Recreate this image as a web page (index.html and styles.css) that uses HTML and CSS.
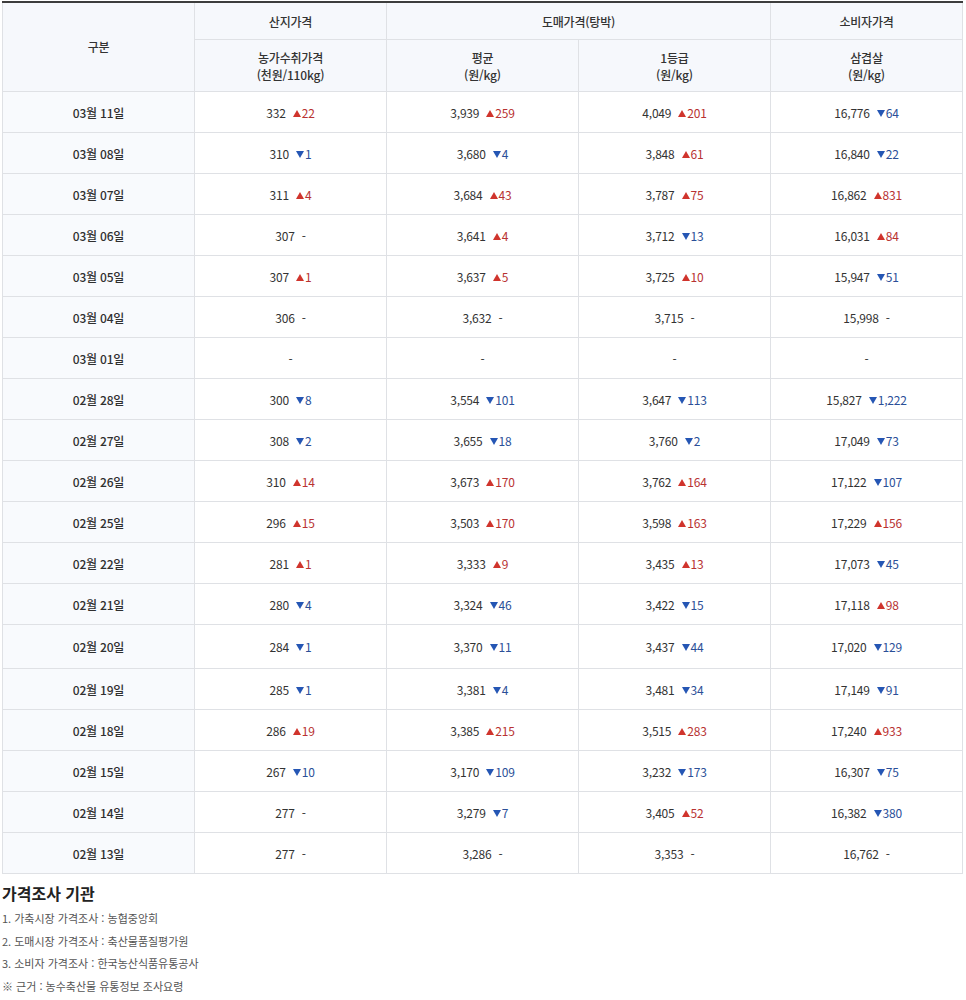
FILE: index.html
```html
<!DOCTYPE html>
<html lang="ko">
<head>
<meta charset="utf-8">
<title>돼지 가격</title>
<link rel="stylesheet" href="styles.css">
</head>
<body>
<div class="wrap">
<table class="price">
  <colgroup><col><col><col><col><col></colgroup>
  <thead>
    <tr class="h1">
      <th rowspan="2" class="gubun">구분</th>
      <th>산지가격</th>
      <th colspan="2">도매가격(탕박)</th>
      <th>소비자가격</th>
    </tr>
    <tr class="h2">
      <th>농가수취가격<br>(천원/110kg)</th>
      <th>평균<br>(원/kg)</th>
      <th>1등급<br>(원/kg)</th>
      <th>삼겹살<br>(원/kg)</th>
    </tr>
  </thead>
  <tbody>
    <tr><th>03월 11일</th><td>332<span class="up">22</span></td><td>3,939<span class="up">259</span></td><td>4,049<span class="up">201</span></td><td>16,776<span class="dn">64</span></td></tr>
    <tr><th>03월 08일</th><td>310<span class="dn">1</span></td><td>3,680<span class="dn">4</span></td><td>3,848<span class="up">61</span></td><td>16,840<span class="dn">22</span></td></tr>
    <tr><th>03월 07일</th><td>311<span class="up">4</span></td><td>3,684<span class="up">43</span></td><td>3,787<span class="up">75</span></td><td>16,862<span class="up">831</span></td></tr>
    <tr><th>03월 06일</th><td>307<span class="eq">-</span></td><td>3,641<span class="up">4</span></td><td>3,712<span class="dn">13</span></td><td>16,031<span class="up">84</span></td></tr>
    <tr><th>03월 05일</th><td>307<span class="up">1</span></td><td>3,637<span class="up">5</span></td><td>3,725<span class="up">10</span></td><td>15,947<span class="dn">51</span></td></tr>
    <tr><th>03월 04일</th><td>306<span class="eq">-</span></td><td>3,632<span class="eq">-</span></td><td>3,715<span class="eq">-</span></td><td>15,998<span class="eq">-</span></td></tr>
    <tr><th>03월 01일</th><td>-</td><td>-</td><td>-</td><td>-</td></tr>
    <tr><th>02월 28일</th><td>300<span class="dn">8</span></td><td>3,554<span class="dn">101</span></td><td>3,647<span class="dn">113</span></td><td>15,827<span class="dn">1,222</span></td></tr>
    <tr><th>02월 27일</th><td>308<span class="dn">2</span></td><td>3,655<span class="dn">18</span></td><td>3,760<span class="dn">2</span></td><td>17,049<span class="dn">73</span></td></tr>
    <tr><th>02월 26일</th><td>310<span class="up">14</span></td><td>3,673<span class="up">170</span></td><td>3,762<span class="up">164</span></td><td>17,122<span class="dn">107</span></td></tr>
    <tr><th>02월 25일</th><td>296<span class="up">15</span></td><td>3,503<span class="up">170</span></td><td>3,598<span class="up">163</span></td><td>17,229<span class="up">156</span></td></tr>
    <tr><th>02월 22일</th><td>281<span class="up">1</span></td><td>3,333<span class="up">9</span></td><td>3,435<span class="up">13</span></td><td>17,073<span class="dn">45</span></td></tr>
    <tr><th>02월 21일</th><td>280<span class="dn">4</span></td><td>3,324<span class="dn">46</span></td><td>3,422<span class="dn">15</span></td><td>17,118<span class="up">98</span></td></tr>
    <tr class="tall"><th>02월 20일</th><td>284<span class="dn">1</span></td><td>3,370<span class="dn">11</span></td><td>3,437<span class="dn">44</span></td><td>17,020<span class="dn">129</span></td></tr>
    <tr><th>02월 19일</th><td>285<span class="dn">1</span></td><td>3,381<span class="dn">4</span></td><td>3,481<span class="dn">34</span></td><td>17,149<span class="dn">91</span></td></tr>
    <tr><th>02월 18일</th><td>286<span class="up">19</span></td><td>3,385<span class="up">215</span></td><td>3,515<span class="up">283</span></td><td>17,240<span class="up">933</span></td></tr>
    <tr><th>02월 15일</th><td>267<span class="dn">10</span></td><td>3,170<span class="dn">109</span></td><td>3,232<span class="dn">173</span></td><td>16,307<span class="dn">75</span></td></tr>
    <tr><th>02월 14일</th><td>277<span class="eq">-</span></td><td>3,279<span class="dn">7</span></td><td>3,405<span class="up">52</span></td><td>16,382<span class="dn">380</span></td></tr>
    <tr><th>02월 13일</th><td>277<span class="eq">-</span></td><td>3,286<span class="eq">-</span></td><td>3,353<span class="eq">-</span></td><td>16,762<span class="eq">-</span></td></tr>
  </tbody>
</table>

<div class="notes">
  <h2 class="notes-title">가격조사 기관</h2>
  <ul class="notes-list">
    <li>1. 가축시장 가격조사 : 농협중앙회</li>
    <li>2. 도매시장 가격조사 : 축산물품질평가원</li>
    <li>3. 소비자 가격조사 : 한국농산식품유통공사</li>
    <li>※ 근거 : 농수축산물 유통정보 조사요령</li>
  </ul>
</div>
</div>
</body>
</html>
```

FILE: styles.css
```css
html, body {
  margin: 0;
  padding: 0;
  background: #fff;
}
body {
  font-family: "Noto Sans CJK KR", "Noto Sans", sans-serif;
  color: #333;
}
.wrap {
  padding: 1px 3px 0 2px;
}
.price {
  width: 961px;
  border-collapse: collapse;
  table-layout: fixed;
  border-top: 2px solid #3d3d3d;
  font-size: 12px;
  line-height: 17px;
}
.price col { width: 20%; }
.price th,
.price td {
  border: 1px solid #dfe1e5;
  text-align: center;
  vertical-align: middle;
  padding: 0;
  font-weight: normal;
  letter-spacing: -0.2px;
}
.price thead th {
  background: #f6f8fc;
  color: #333;
  font-weight: 500;
}
.price thead .h1 th { height: 36px; }
.price thead .h2 th { height: 51px; }
.price thead .gubun { padding-bottom: 2px; vertical-align: middle; }
.price tbody th {
  background: #f8fafd;
  font-weight: 500;
  color: #2f2f2f;
  height: 40px;
}
.price tbody td {
  height: 40px;
  color: #333;
}
.price tbody tr.tall th,
.price tbody tr.tall td { height: 43px; }

.up, .dn, .eq {
  margin-left: 7px;
}
.up { color: #b83232; }
.dn { color: #2b4f98; }
.eq { color: #333; }
.up::before,
.dn::before {
  content: "";
  display: inline-block;
  width: 0;
  height: 0;
  margin-right: 1px;
  vertical-align: 1px;
  border-left: 4.5px solid transparent;
  border-right: 4.5px solid transparent;
}
.up::before { border-bottom: 7px solid #d0342c; }
.dn::before { border-top: 7px solid #2556b4; }

.notes { padding-top: 8px; }
.notes-title {
  margin: 0 0 3px 0;
  font-size: 16px;
  line-height: 22px;
  font-weight: bold;
  color: #222;
}
.notes-list {
  list-style: none;
  margin: 0;
  padding: 0;
  font-size: 11px;
  color: #555;
}
.notes-list li {
  line-height: 22.6px;
  height: 22.6px;
}
```
